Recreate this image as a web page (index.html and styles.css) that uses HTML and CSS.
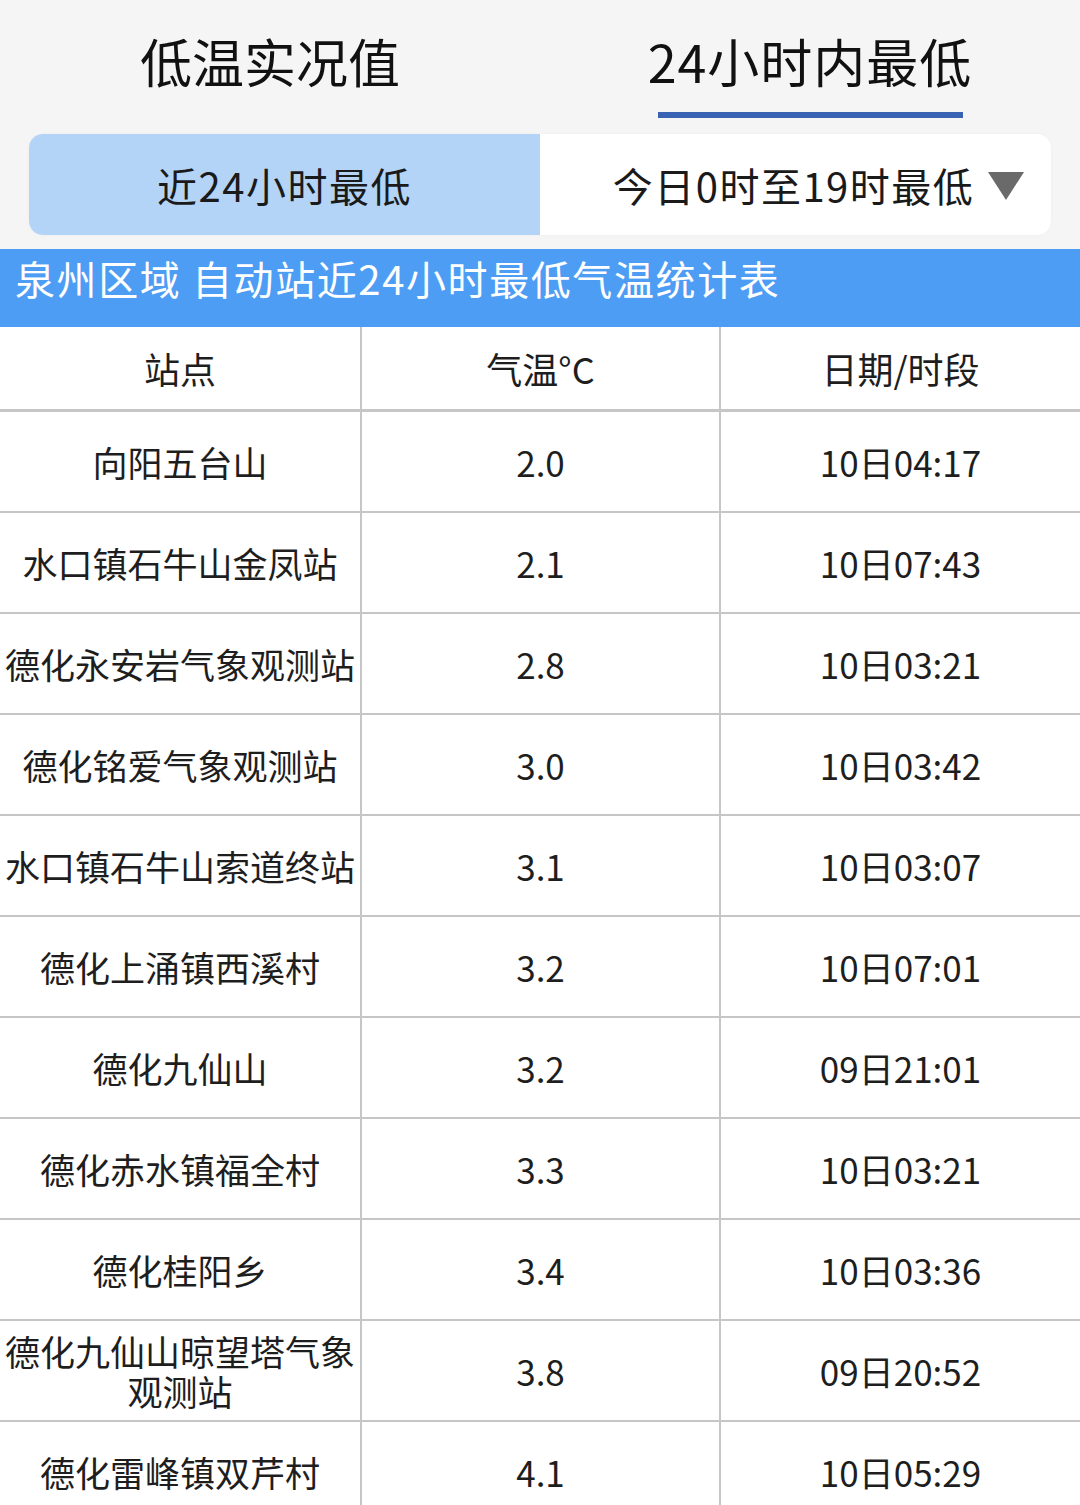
FILE: index.html
```html
<!DOCTYPE html>
<html lang="zh-CN">
<head>
<meta charset="utf-8">
<title>低温实况</title>
<link rel="stylesheet" href="styles.css">
</head>
<body>
<div class="page">
  <div class="tabs">
    <div class="tab"><span class="tab-label">低温实况值</span></div>
    <div class="tab active"><span class="tab-label">24小时内最低</span><span class="tab-bar"></span></div>
  </div>
  <div class="segment">
    <div class="seg seg-on">近24小时最低</div>
    <div class="seg seg-off"><span>今日0时至19时最低</span><span class="caret"></span></div>
  </div>
  <div class="banner">泉州区域 自动站近24小时最低气温统计表</div>
  <table class="grid">
    <colgroup><col class="c1"><col class="c2"><col class="c3"></colgroup>
    <thead>
      <tr><th>站点</th><th>气温°C</th><th>日期/时段</th></tr>
    </thead>
    <tbody>
      <tr><td>向阳五台山</td><td>2.0</td><td>10日04:17</td></tr>
      <tr><td>水口镇石牛山金凤站</td><td>2.1</td><td>10日07:43</td></tr>
      <tr><td>德化永安岩气象观测站</td><td>2.8</td><td>10日03:21</td></tr>
      <tr><td>德化铭爱气象观测站</td><td>3.0</td><td>10日03:42</td></tr>
      <tr><td>水口镇石牛山索道终站</td><td>3.1</td><td>10日03:07</td></tr>
      <tr><td>德化上涌镇西溪村</td><td>3.2</td><td>10日07:01</td></tr>
      <tr><td>德化九仙山</td><td>3.2</td><td>09日21:01</td></tr>
      <tr><td>德化赤水镇福全村</td><td>3.3</td><td>10日03:21</td></tr>
      <tr><td>德化桂阳乡</td><td>3.4</td><td>10日03:36</td></tr>
      <tr><td>德化九仙山晾望塔气象观测站</td><td>3.8</td><td>09日20:52</td></tr>
      <tr><td>德化雷峰镇双芹村</td><td>4.1</td><td>10日05:29</td></tr>
    </tbody>
  </table>
</div>
</body>
</html>
```

FILE: styles.css
```css
html, body {
  margin: 0;
  padding: 0;
  background: #f5f5f5;
}
body {
  font-family: "Noto Sans CJK SC", "Noto Sans", sans-serif;
  color: #1a1a1a;
  width: 1080px;
  height: 1505px;
  overflow: hidden;
}
.page {
  display: flex;
  flex-direction: column;
}
.tabs {
  display: flex;
  height: 120px;
}
.tab {
  flex: 1;
  display: flex;
  flex-direction: column;
  align-items: center;
  padding-top: 30px;
}
.tab-label {
  font-size: 52px;
  line-height: 62px;
  color: #111;
}
.tab.active .tab-label {
  letter-spacing: 1px;
}
.tab-bar {
  margin-top: 20px;
  width: 305px;
  height: 6px;
  background: #3a62b2;
}
.segment {
  margin: 14px 29px 0 29px;
  height: 101px;
  display: flex;
  border-radius: 14px;
  overflow: hidden;
  background: #fff;
  box-shadow: 0 0 3px rgba(0,0,0,0.04);
}
.seg {
  display: flex;
  align-items: center;
  justify-content: center;
  font-size: 40px;
  letter-spacing: 1.5px;
  color: #1a1a1a;
}
.seg-on {
  width: 511px;
  background: #b4d4f7;
}
.seg-off {
  flex: 1;
  padding-left: 46px;
  gap: 14px;
}
.caret {
  width: 0;
  height: 0;
  border-left: 18px solid transparent;
  border-right: 18px solid transparent;
  border-top: 28px solid #6a6a6a;
  margin-top: 2px;
}
.banner {
  margin-top: 14px;
  height: 78px;
  box-sizing: border-box;
  background: #4d9df4;
  color: #fff;
  font-size: 40px;
  line-height: 50px;
  letter-spacing: 1.6px;
  padding: 4px 0 0 15px;
  white-space: nowrap;
}
.grid {
  width: 1080px;
  border-collapse: collapse;
  table-layout: fixed;
  background: #fff;
}
.c1 { width: 361px; }
.c2 { width: 359px; }
.c3 { width: 360px; }
.grid th, .grid td {
  text-align: center;
  vertical-align: middle;
  padding: 0 2px;
  color: #1e1e1e;
  font-weight: 400;
  line-height: 40px;
}
.grid th {
  height: 82px;
  font-size: 36px;
  border-bottom: 3px solid #c6c6c6;
}
.grid td {
  height: 99px;
  font-size: 35px;
  border-bottom: 2px solid #c6c6c6;
}
.grid th + th, .grid td + td {
  border-left: 2px solid #c6c6c6;
}
```
